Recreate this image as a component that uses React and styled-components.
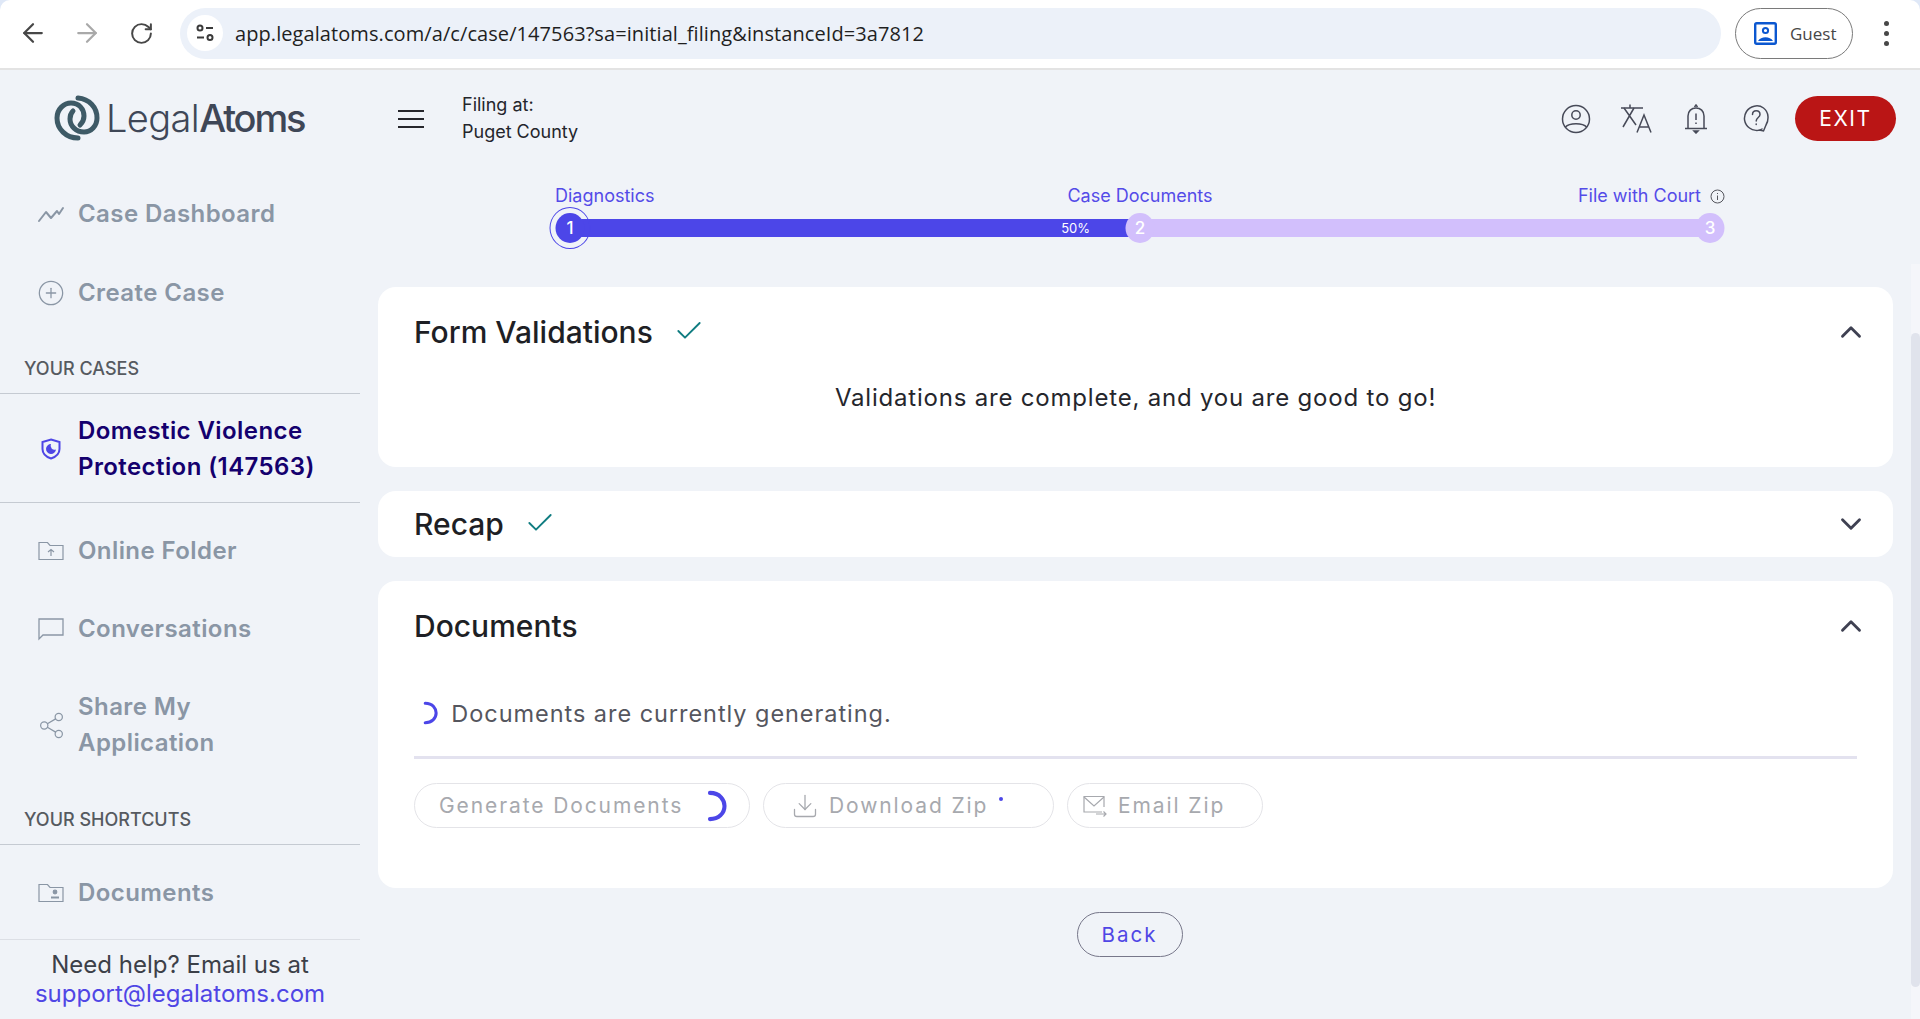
import styled, { createGlobalStyle } from "styled-components";
import {
  ArrowLeft,
  ArrowRight,
  RotateCw,
  ChevronUp,
  ChevronDown,
  Check,
  CirclePlus,
  Share2,
  Download,
} from "lucide-react";

const GlobalStyle = createGlobalStyle`
  html, body {
    margin: 0;
    padding: 0;
    height: 100%;
    overflow: hidden;
    background: #dfe8f7;
    font-family: Inter, "Liberation Sans", sans-serif;
  }
  * {
    box-sizing: border-box;
  }
`;

const Page = styled.div`
  width: 1920px;
  height: 1019px;
  display: flex;
  flex-direction: column;
  overflow: hidden;
`;

/* browser chrome */
const BrowserBar = styled.div`
  height: 70px;
  flex: none;
  display: flex;
  align-items: center;
  padding: 0 0 2px 24px;
  background: #fff;
  border-bottom: 2px solid #e3e3e3;
  border-radius: 10px 10px 0 0;
`;

const NavButton = styled.div`
  width: 18px;
  height: 24px;
  margin-right: 36px;
  display: flex;
  align-items: center;
  justify-content: center;
  color: ${(p) => (p.$off ? "#a9a9a9" : "#474747")};

  svg {
    flex: none;
  }
`;

const UrlBar = styled.div`
  width: 1541px;
  height: 51px;
  margin-left: -6px;
  padding-left: 7px;
  display: flex;
  align-items: center;
  background: #ecf1f9;
  border-radius: 26px;
`;

const TuneCircle = styled.div`
  width: 36px;
  height: 36px;
  border-radius: 50%;
  background: #fff;
  display: flex;
  align-items: center;
  justify-content: center;
  margin-right: 12px;
`;

const UrlText = styled.span`
  font-family: "Open Sans", sans-serif;
  font-size: 20px;
  letter-spacing: 0.08px;
  color: #1f1f1f;
`;

const GuestPill = styled.div`
  width: 118px;
  height: 51px;
  margin-left: 14px;
  padding-left: 18px;
  display: flex;
  align-items: center;
  gap: 13px;
  border: 1.5px solid #7a7a7a;
  border-radius: 26px;
  font-family: "Open Sans", sans-serif;
  font-size: 17px;
  color: #474747;
`;

const DotsMenu = styled.div`
  margin-left: 31px;
  display: flex;
  flex-direction: column;
  gap: 5px;

  span {
    width: 5px;
    height: 5px;
    border-radius: 50%;
    background: #474747;
  }
`;

const Body = styled.div`
  flex: 1;
  display: flex;
  min-height: 0;
  background: #f0f3f8;
`;

/* sidebar */
const Sidebar = styled.aside`
  width: 360px;
  flex: none;
  display: flex;
  flex-direction: column;
`;

const LogoRow = styled.div`
  height: 103px;
  padding: 25px 0 0 54px;
  display: flex;
  align-items: flex-start;
  gap: 6px;
`;

const LogoText = styled.div`
  font-size: 38px;
  line-height: 46px;
  font-weight: 300;
  letter-spacing: -0.6px;
  color: #3f4757;

  b {
    font-weight: 500;
    letter-spacing: -2.1px;
  }
`;

const NavItem = styled.div`
  height: ${(p) => p.$h || 79}px;
  padding: 2px 0 0 36px;
  display: flex;
  align-items: center;
  gap: 12px;
  font-size: 24px;
  line-height: 36px;
  font-weight: 600;
  letter-spacing: 0.42px;
  color: ${(p) => (p.$active ? "#14006e" : "#8a96a5")};
  border-bottom: ${(p) => (p.$active ? "1px solid #c5cad2" : "none")};
  margin-bottom: ${(p) => (p.$active ? 8 : 0)}px;
`;

const NavIcon = styled.span`
  width: 30px;
  flex: none;
  display: flex;
  justify-content: center;
  color: ${(p) => (p.$active ? "#4f46e5" : "#8a96a5")};
`;

const SectionLabel = styled.div`
  height: ${(p) => p.$h}px;
  padding: 0 0 12px 24px;
  display: flex;
  align-items: flex-end;
  font-size: 18px;
  line-height: 24px;
  font-weight: 500;
  color: #565a60;
  border-bottom: 1px solid #c5cad2;
`;

const HelpBox = styled.div`
  border-top: 1px solid #dcdfe5;
  padding-top: 10px;
  text-align: center;
  font-size: 24px;
  line-height: 29px;
  color: #3c4048;

  a {
    color: #4f46e5;
    text-decoration: none;
  }
`;

/* main column */
const Main = styled.main`
  flex: 1;
  min-width: 0;
  padding: 0 18px;
  display: flex;
  flex-direction: column;
`;

const TopBar = styled.div`
  height: 96px;
  padding: 20px 0 0 20px;
  margin-right: -3px;
  display: flex;
  align-items: flex-start;
`;

const Hamburger = styled.div`
  width: 26px;
  margin-top: 20px;
  display: flex;
  flex-direction: column;
  gap: 6px;

  span {
    height: 2px;
    background: #26262c;
  }
`;

const FilingInfo = styled.div`
  margin: 1px 0 0 38px;
  font-size: 18px;
  line-height: 27px;
  color: #24252b;
`;

const TopIcons = styled.div`
  margin-left: auto;
  display: flex;
  align-items: center;
  gap: 24px;
  margin-top: 6px;
`;

const TopIcon = styled.span`
  width: 36px;
  display: flex;
  justify-content: center;
  color: #474a58;
`;

const ExitButton = styled.button`
  width: 101px;
  height: 45px;
  margin-left: -3px;
  border: none;
  border-radius: 23px;
  background: #ba1515;
  color: #fff;
  font-family: Inter, sans-serif;
  font-size: 21px;
  letter-spacing: 1.6px;
`;

const Stepper = styled.div`
  width: 1140px;
  margin-left: 192px;
  height: 121px;
  display: flex;
  flex-direction: column;
`;

const StepLabels = styled.div`
  height: 53px;
  padding-top: 18px;
  margin: 0 -15px;
  display: flex;
  font-size: 18px;
  line-height: 24px;
  color: #544be8;
`;

const StepLabel = styled.span`
  flex: ${(p) => (p.$middle ? "none" : 1)};
  display: flex;
  align-items: center;
  align-self: flex-start;
  gap: 9px;
  justify-content: ${(p) => (p.$end ? "flex-end" : "flex-start")};
`;

const Track = styled.div`
  position: relative;
  height: 18px;
  background: #d2bffc;
`;

const TrackFill = styled.div`
  height: 100%;
  padding-right: 50px;
  display: flex;
  align-items: center;
  justify-content: flex-end;
  background: #4c46e8;
  color: #fff;
  font-size: 13px;
`;

const StepDot = styled.div`
  position: absolute;
  top: 50%;
  left: ${(p) => p.$left}%;
  width: 29px;
  height: 30px;
  transform: translate(-50%, -50%);
  display: flex;
  align-items: center;
  justify-content: center;
  border-radius: 50%;
  font-size: 17px;
  font-weight: 500;
  color: #fff;
  background: ${(p) => (p.$current ? "#4c46e8" : "#d2bffc")};

  ${(p) =>
    p.$current &&
    `
    &::after {
      content: "";
      position: absolute;
      inset: -6px;
      border: 1px solid #4c46e8;
      border-radius: 50%;
    }
  `}
`;

const CardStack = styled.div`
  display: flex;
  flex-direction: column;
  gap: 24px;
`;

const Card = styled.section`
  height: ${(p) => p.$h}px;
  padding: 0 36px;
  background: #fff;
  border-radius: 18px;
`;

const CardHeader = styled.div`
  height: ${(p) => p.$h}px;
  display: flex;
  align-items: center;
  gap: ${(p) => p.$gap || 20}px;
`;

const CardTitle = styled.h2`
  margin: 0;
  font-size: 30px;
  line-height: 40px;
  font-weight: 500;
  color: #1e1f25;
`;

const CheckMark = styled.span`
  display: flex;
  margin-top: -3px;
  color: #0f7c80;
`;

const Chevron = styled.span`
  margin-left: auto;
  margin-right: -11px;
  display: flex;
  color: #3f4152;
`;

const CenterNote = styled.p`
  margin: 5px 0 0;
  text-align: center;
  font-size: 24px;
  line-height: 32px;
  letter-spacing: 0.8px;
  color: #25262c;
`;

const StatusRow = styled.div`
  height: 38px;
  margin-top: 23px;
  padding-left: 9px;
  display: flex;
  align-items: center;
  gap: 13px;
  font-size: 23.5px;
  letter-spacing: 0.95px;
  color: #55565e;
`;

const Rule = styled.div`
  height: 3px;
  margin-top: 24px;
  background: #e3e2ef;
`;

const ActionRow = styled.div`
  display: flex;
  gap: 13px;
  margin-top: 24px;
`;

const PillButton = styled.div`
  width: ${(p) => p.$w}px;
  height: 45px;
  padding-left: ${(p) => p.$pad}px;
  display: flex;
  align-items: center;
  gap: ${(p) => p.$gap || 14}px;
  border: 1px solid #e4e4e8;
  border-radius: 23px;
  font-size: 21px;
  letter-spacing: 1.9px;
  color: #a7a9ae;
`;

const TinyDot = styled.i`
  width: 4px;
  height: 4px;
  margin: -14px 0 0 1px;
  border-radius: 50%;
  background: #4c46e8;
`;

const BackRow = styled.div`
  display: flex;
  justify-content: center;
  padding-right: 12px;
  margin-top: 24px;
`;

const BackButton = styled.button`
  width: 106px;
  height: 45px;
  background: transparent;
  border: 1px solid #77778a;
  border-radius: 23px;
  font-family: Inter, sans-serif;
  font-size: 20.5px;
  letter-spacing: 2px;
  color: #4f46e5;
`;

const ScrollTrack = styled.div`
  width: 9px;
  flex: none;
  margin-top: 194px;
  display: flex;
  flex-direction: column;
  background: #f5f6fa;
`;

const ScrollThumb = styled.div`
  height: 654px;
  margin-top: 69px;
  background: #e0e3ec;
  border-radius: 5px;
`;

const Spinner = ({ size = 24 }) => (
  <svg width={size * 0.64} height={size} viewBox="0 0 14 22" fill="none" stroke="#4c46e8" strokeWidth="2.8" strokeLinecap="round">
    <path d="M2 2 C9 2 12 7 12 11 C12 16 8 20 2 20" />
  </svg>
);

const Logo = () => (
  <svg width="46" height="46" viewBox="0 0 46 46" fill="none" stroke="#3e5a66" strokeWidth="5" strokeLinecap="round">
    <path d="M24 3 C35 4 43 12 43 23 C43 31 37 37 30 37 C22 37 16 31 16 24 C16 21 17 18 19 16" />
    <path d="M24 43 C12 43 3 34 3 23 C3 14 10 8 17 8 C25 8 30 14 30 21 C30 25 28 28 26 30" />
  </svg>
);

const ChartIcon = () => (
  <svg width="28" height="18" viewBox="0 0 28 18" fill="none" stroke="#8a96a5" strokeWidth="2" strokeLinecap="round" strokeLinejoin="round">
    <path d="M2 16 L9 7 L14 13 L20 6 L22 9 L26 3" />
  </svg>
);

const ShieldIcon = () => (
  <svg width="20" height="22" viewBox="0 0 20 22" fill="none">
    <path d="M10 1.5 L18.5 4 V11 C18.5 16 14.5 19 10 20.5 C5.5 19 1.5 16 1.5 11 V4 Z" stroke="#4f46e5" strokeWidth="2" />
    <path d="M10 6 A5 5 0 1 0 15 11.5 A4 4 0 0 1 10 6 Z" fill="#4f46e5" />
  </svg>
);

const FolderUpIcon = () => (
  <svg width="26" height="20" viewBox="0 0 26 20" fill="none" stroke="#8a96a5" strokeWidth="1.2">
    <path d="M1 1.5 H9.5 L12 4.5 H25 V18.5 H1 Z" />
    <path d="M13 15 V8.5 M10 11 L13 8.5 L16 11" />
  </svg>
);

const ChatIcon = () => (
  <svg width="26" height="24" viewBox="0 0 26 24" fill="none" stroke="#8a96a5" strokeWidth="1.3">
    <path d="M1 2 H25 V18 H5 L1 22 Z" />
  </svg>
);

const FolderUserIcon = () => (
  <svg width="26" height="20" viewBox="0 0 26 20" fill="none" stroke="#8a96a5" strokeWidth="1.2">
    <path d="M1 1.5 H9.5 L12 4.5 H25 V18.5 H1 Z" />
    <circle cx="17" cy="9" r="1.8" fill="#8a96a5" />
    <path d="M13 14.5 H21" strokeWidth="2" />
  </svg>
);

const UserCircleIcon = () => (
  <svg width="30" height="30" viewBox="0 0 30 30" fill="none" stroke="#474a58" strokeWidth="1.5">
    <circle cx="15" cy="15" r="13.5" />
    <circle cx="15" cy="11" r="4.2" />
    <path d="M4.5 23 C8 18.5 22 18.5 25.5 23" />
  </svg>
);

const TranslateIcon = () => (
  <svg width="32" height="30" viewBox="0 0 32 30" fill="none" stroke="#474a58" strokeWidth="1.5">
    <path d="M1 4 H23 M10 0.5 V4" />
    <path d="M4 4 L16 21 M14 4 L3 23" />
    <path d="M17 28.5 L24 11 L31 28.5 M19.5 23 H28.5" />
  </svg>
);

const BellIcon = () => (
  <svg width="24" height="30" viewBox="0 0 24 30" fill="none" stroke="#474a58" strokeWidth="1.5">
    <path d="M4 24 V12 C4 7 7.5 4 12 4 C16.5 4 20 7 20 12 V24" />
    <path d="M1 24.5 H23" />
    <path d="M10.5 3 L12 1 L13.5 3" />
    <path d="M10 27 H14 L12 29 Z" fill="#474a58" />
    <path d="M12 9.5 V16 M12 18.5 V20" />
  </svg>
);

const HelpIcon = () => (
  <svg width="26" height="30" viewBox="0 0 26 30" fill="none" stroke="#474a58" strokeWidth="1.5" strokeLinecap="round">
    <path d="M19 25 C16 27 10 27 6.5 24 C1 20 0 13 3.5 7.5 C7 2 15 0 20.5 4 C26 8 26 16 23 21 L20.5 27 L16 26" />
    <path d="M9.5 10.5 C9.5 5.5 17 5.5 17 10.5 C17 13.5 13.2 13.5 13.2 17" />
    <path d="M13.2 20 V20.5" />
  </svg>
);

const InfoIcon = () => (
  <svg width="15" height="15" viewBox="0 0 15 15" fill="none" stroke="#55565e" strokeWidth="1">
    <circle cx="7.5" cy="7.5" r="6.5" />
    <path d="M7.5 6.5 V11 M7.5 4 V5" />
  </svg>
);

const MailArrowIcon = () => (
  <svg width="24" height="22" viewBox="0 0 24 22" fill="none" stroke="#a7a9ae" strokeWidth="1.2">
    <path d="M19 17 H1 V1.5 H21 V12" />
    <path d="M1 2 L11 11 L21 2" />
    <path d="M13 19 H23 M20.5 16.5 L23 19 L20.5 21.5" />
  </svg>
);

export default function App() {
  return (
    <Page>
      <GlobalStyle />
      <BrowserBar>
        <NavButton><ArrowLeft size={30} strokeWidth={1.8} /></NavButton>
        <NavButton $off><ArrowRight size={30} strokeWidth={1.8} /></NavButton>
        <NavButton><RotateCw size={25} strokeWidth={1.9} /></NavButton>
        <UrlBar>
          <TuneCircle>
            <svg width="20" height="20" viewBox="0 0 20 20" fill="none" stroke="#3a3a3a" strokeWidth="2">
              <circle cx="5" cy="5" r="2.5" />
              <path d="M11 5 H18 M2 14.5 H9" />
              <circle cx="15" cy="14.5" r="2.5" />
            </svg>
          </TuneCircle>
          <UrlText>app.legalatoms.com/a/c/case/147563?sa=initial_filing&amp;instanceId=3a7812</UrlText>
        </UrlBar>
        <GuestPill>
          <svg width="23" height="23" viewBox="0 0 23 23" fill="none">
            <rect x="1.2" y="1.2" width="20.6" height="20.6" rx="1.5" stroke="#0b57d0" strokeWidth="2.4" />
            <circle cx="11.5" cy="8.5" r="2.6" stroke="#0b57d0" strokeWidth="2" />
            <path d="M4 19 C7 14 16 14 19 19 Z" fill="#0b57d0" />
          </svg>
          Guest
        </GuestPill>
        <DotsMenu><span /><span /><span /></DotsMenu>
      </BrowserBar>

      <Body>
        <Sidebar>
          <LogoRow>
            <Logo />
            <LogoText>Legal<b>Atoms</b></LogoText>
          </LogoRow>
          <NavItem><NavIcon><ChartIcon /></NavIcon>Case Dashboard</NavItem>
          <NavItem><NavIcon><CirclePlus size={28} strokeWidth={1.1} /></NavIcon>Create Case</NavItem>
          <SectionLabel $h={63}>YOUR CASES</SectionLabel>
          <NavItem $active $h={109}>
            <NavIcon $active><ShieldIcon /></NavIcon>
            <span>Domestic Violence<br />Protection (147563)</span>
          </NavItem>
          <NavItem $h={78}><NavIcon><FolderUpIcon /></NavIcon>Online Folder</NavItem>
          <NavItem $h={78}><NavIcon><ChatIcon /></NavIcon>Conversations</NavItem>
          <NavItem $h={114}>
            <NavIcon><Share2 size={29} strokeWidth={1} /></NavIcon>
            <span>Share My<br />Application</span>
          </NavItem>
          <SectionLabel $h={64}>YOUR SHORTCUTS</SectionLabel>
          <NavItem $h={94}><NavIcon><FolderUserIcon /></NavIcon>Documents</NavItem>
          <HelpBox>
            Need help? Email us at<br />
            <a href="#support">support@legalatoms.com</a>
          </HelpBox>
        </Sidebar>

        <Main>
          <TopBar>
            <Hamburger><span /><span /><span /></Hamburger>
            <FilingInfo>Filing at:<br />Puget County</FilingInfo>
            <TopIcons>
              <TopIcon><UserCircleIcon /></TopIcon>
              <TopIcon><TranslateIcon /></TopIcon>
              <TopIcon><BellIcon /></TopIcon>
              <TopIcon><HelpIcon /></TopIcon>
              <ExitButton>EXIT</ExitButton>
            </TopIcons>
          </TopBar>

          <Stepper>
            <StepLabels>
              <StepLabel>Diagnostics</StepLabel>
              <StepLabel $middle>Case Documents</StepLabel>
              <StepLabel $end>File with Court <InfoIcon /></StepLabel>
            </StepLabels>
            <Track>
              <TrackFill style={{ width: "50%" }}>50%</TrackFill>
              <StepDot $left={0} $current>1</StepDot>
              <StepDot $left={50}>2</StepDot>
              <StepDot $left={100}>3</StepDot>
            </Track>
          </Stepper>

          <CardStack>
            <Card $h={180}>
              <CardHeader $h={90}>
                <CardTitle>Form Validations</CardTitle>
                <CheckMark><Check size={32} strokeWidth={1.4} /></CheckMark>
                <Chevron><ChevronUp size={34} strokeWidth={2} /></Chevron>
              </CardHeader>
              <CenterNote>Validations are complete, and you are good to go!</CenterNote>
            </Card>

            <Card $h={66}>
              <CardHeader $h={66}>
                <CardTitle>Recap</CardTitle>
                <CheckMark><Check size={32} strokeWidth={1.4} /></CheckMark>
                <Chevron><ChevronDown size={34} strokeWidth={2} /></Chevron>
              </CardHeader>
            </Card>

            <Card $h={307}>
              <CardHeader $h={90}>
                <CardTitle>Documents</CardTitle>
                <Chevron><ChevronUp size={34} strokeWidth={2} /></Chevron>
              </CardHeader>
              <StatusRow>
                <Spinner />
                Documents are currently generating.
              </StatusRow>
              <Rule />
              <ActionRow>
                <PillButton $w={336} $pad={24} $gap={24}>
                  Generate Documents
                  <Spinner size={32} />
                </PillButton>
                <PillButton $w={291} $pad={27} $gap={10}>
                  <Download size={28} strokeWidth={1.1} color="#a7a9ae" />
                  Download Zip
                  <TinyDot />
                </PillButton>
                <PillButton $w={196} $pad={15} $gap={11}>
                  <MailArrowIcon />
                  Email Zip
                </PillButton>
              </ActionRow>
            </Card>
          </CardStack>

          <BackRow>
            <BackButton>Back</BackButton>
          </BackRow>
        </Main>

        <ScrollTrack>
          <ScrollThumb />
        </ScrollTrack>
      </Body>
    </Page>
  );
}
